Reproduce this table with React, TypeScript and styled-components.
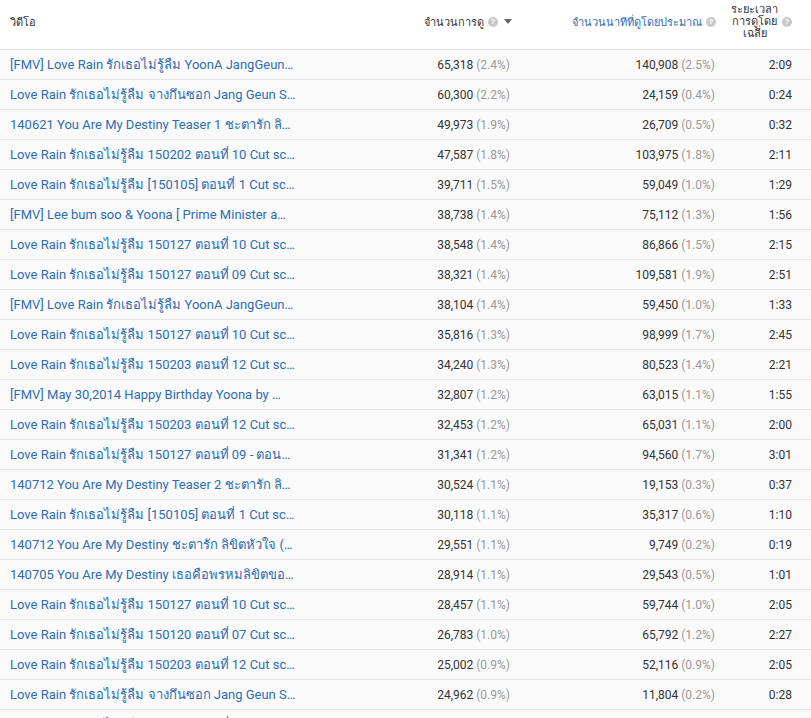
import React from "react";
import styled, { createGlobalStyle } from "styled-components";

const Global = createGlobalStyle`
  html, body { margin: 0; padding: 0; background: #fff; }
  body { font-family: Roboto, "Noto Sans", "DejaVu Sans", sans-serif; }
`;

const Table = styled.div`
  width: 811px;
  display: flex;
  flex-direction: column;
  background: #fff;
`;

const cols = "302px 218px 205px 86px";

const HeaderRow = styled.div`
  display: grid;
  grid-template-columns: ${cols};
  border-bottom: 1px solid #e2e2e2;
  align-items: center;
  padding-bottom: 6px;
  box-sizing: border-box;
  height: 50px;
  font-family: Tahoma, "DejaVu Sans", "Noto Sans", sans-serif;
  font-size: 11px;
  color: #333;
`;

const HeadCell = styled.div<{ $align?: "left" | "right"; $blue?: boolean; $pr?: number }>`
  display: flex;
  align-items: center;
  justify-content: ${(p) => (p.$align === "right" ? "flex-end" : "flex-start")};
  gap: 4px;
  padding-left: 10px;
  padding-right: ${(p) => p.$pr ?? 10}px;
  color: ${(p) => (p.$blue ? "#2f6db3" : "#333")};
  white-space: nowrap;
`;

const StackLabel = styled.div`
  text-align: center;
  line-height: 12px;
  white-space: nowrap;
`;

const Help = styled.span`
  display: inline-flex;
  align-items: center;
  justify-content: center;
  width: 10px;
  height: 10px;
  border-radius: 50%;
  background: #c9c9c9;
  color: #fff;
  font-family: Arial, "Liberation Sans", sans-serif;
  font-size: 8px;
  font-weight: bold;
  line-height: 1;
  flex: none;
`;

const SortArrow = styled.span`
  width: 0;
  height: 0;
  border-left: 4px solid transparent;
  border-right: 4px solid transparent;
  border-top: 5px solid #666;
  margin-left: 2px;
`;

const Row = styled.div`
  display: grid;
  grid-template-columns: ${cols};
  height: 30px;
  box-sizing: border-box;
  border-bottom: 1px solid #e4e4e4;
  background: #fafafa;
  align-items: center;
`;

const TitleCell = styled.div`
  padding-left: 10px;
  padding-right: 2px;
  font-size: 13px;
  color: #2f6db3;
  white-space: nowrap;
  overflow: hidden;
  text-overflow: ellipsis;
`;

const NumCell = styled.div<{ $pr?: number }>`
  text-align: right;
  padding-right: ${(p) => p.$pr ?? 10}px;
  font-size: 12px;
  color: #333;
  white-space: nowrap;
`;

const Pct = styled.span`
  color: #999;
`;

type R = [string, string, string, string, string, string];

const rows: R[] = [
  ["[FMV] Love Rain รักเธอไม่รู้ลืม YoonA JangGeun…", "65,318", "2.4%", "140,908", "2.5%", "2:09"],
  ["Love Rain รักเธอไม่รู้ลืม จางกึนซอก Jang Geun S…", "60,300", "2.2%", "24,159", "0.4%", "0:24"],
  ["140621 You Are My Destiny Teaser 1 ชะตารัก ลิ…", "49,973", "1.9%", "26,709", "0.5%", "0:32"],
  ["Love Rain รักเธอไม่รู้ลืม 150202 ตอนที่ 10 Cut sc…", "47,587", "1.8%", "103,975", "1.8%", "2:11"],
  ["Love Rain รักเธอไม่รู้ลืม [150105] ตอนที่ 1 Cut sc…", "39,711", "1.5%", "59,049", "1.0%", "1:29"],
  ["[FMV] Lee bum soo & Yoona [ Prime Minister a…", "38,738", "1.4%", "75,112", "1.3%", "1:56"],
  ["Love Rain รักเธอไม่รู้ลืม 150127 ตอนที่ 10 Cut sc…", "38,548", "1.4%", "86,866", "1.5%", "2:15"],
  ["Love Rain รักเธอไม่รู้ลืม 150127 ตอนที่ 09 Cut sc…", "38,321", "1.4%", "109,581", "1.9%", "2:51"],
  ["[FMV] Love Rain รักเธอไม่รู้ลืม YoonA JangGeun…", "38,104", "1.4%", "59,450", "1.0%", "1:33"],
  ["Love Rain รักเธอไม่รู้ลืม 150127 ตอนที่ 10 Cut sc…", "35,816", "1.3%", "98,999", "1.7%", "2:45"],
  ["Love Rain รักเธอไม่รู้ลืม 150203 ตอนที่ 12 Cut sc…", "34,240", "1.3%", "80,523", "1.4%", "2:21"],
  ["[FMV] May 30,2014 Happy Birthday Yoona by …", "32,807", "1.2%", "63,015", "1.1%", "1:55"],
  ["Love Rain รักเธอไม่รู้ลืม 150203 ตอนที่ 12 Cut sc…", "32,453", "1.2%", "65,031", "1.1%", "2:00"],
  ["Love Rain รักเธอไม่รู้ลืม 150127 ตอนที่ 09 - ตอน…", "31,341", "1.2%", "94,560", "1.7%", "3:01"],
  ["140712 You Are My Destiny Teaser 2 ชะตารัก ลิ…", "30,524", "1.1%", "19,153", "0.3%", "0:37"],
  ["Love Rain รักเธอไม่รู้ลืม [150105] ตอนที่ 1 Cut sc…", "30,118", "1.1%", "35,317", "0.6%", "1:10"],
  ["140712 You Are My Destiny ชะตารัก ลิขิตหัวใจ (…", "29,551", "1.1%", "9,749", "0.2%", "0:19"],
  ["140705 You Are My Destiny เธอคือพรหมลิขิตขอ…", "28,914", "1.1%", "29,543", "0.5%", "1:01"],
  ["Love Rain รักเธอไม่รู้ลืม 150127 ตอนที่ 10 Cut sc…", "28,457", "1.1%", "59,744", "1.0%", "2:05"],
  ["Love Rain รักเธอไม่รู้ลืม 150120 ตอนที่ 07 Cut sc…", "26,783", "1.0%", "65,792", "1.2%", "2:27"],
  ["Love Rain รักเธอไม่รู้ลืม 150203 ตอนที่ 12 Cut sc…", "25,002", "0.9%", "52,116", "0.9%", "2:05"],
  ["Love Rain รักเธอไม่รู้ลืม จางกึนซอก Jang Geun S…", "24,962", "0.9%", "11,804", "0.2%", "0:28"],
  ["Love Rain รักเธอไม่รู้ลืม 150127 ตอนที่ 11 Cut sc…", "24,310", "0.9%", "58,204", "1.0%", "2:23"],
];

export default function App() {
  return (
    <>
      <Global />
      <Table>
        <HeaderRow>
          <HeadCell>วิดีโอ</HeadCell>
          <HeadCell $align="right" $pr={8}>
            จำนวนการดู <Help>?</Help>
            <SortArrow />
          </HeadCell>
          <HeadCell $align="right" $blue $pr={9}>
            จำนวนนาทีที่ดูโดยประมาณ <Help>?</Help>
          </HeadCell>
          <HeadCell $align="right" $pr={19}>
            <StackLabel>
              ระยะเวลา
              <br />
              การดูโดย
              <br />
              เฉลี่ย
            </StackLabel>
            <Help>?</Help>
          </HeadCell>
        </HeaderRow>
        {rows.map((r, i) => (
          <Row key={i}>
            <TitleCell>{r[0]}</TitleCell>
            <NumCell>
              {r[1]} <Pct>({r[2]})</Pct>
            </NumCell>
            <NumCell>
              {r[3]} <Pct>({r[4]})</Pct>
            </NumCell>
            <NumCell $pr={19}>{r[5]}</NumCell>
          </Row>
        ))}
      </Table>
    </>
  );
}
